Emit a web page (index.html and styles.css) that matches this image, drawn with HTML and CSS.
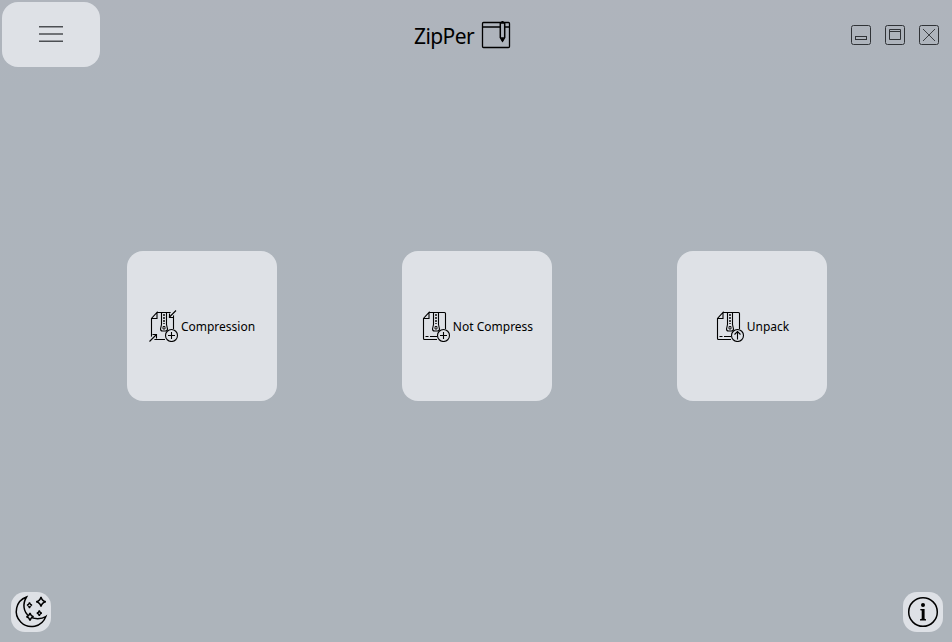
FILE: index.html
```
<!DOCTYPE html>
<html lang="en">
<head>
<meta charset="utf-8">
<title>ZipPer</title>
<link rel="stylesheet" href="styles.css">
</head>
<body>
<svg class="defs" aria-hidden="true">
  <symbol id="archive" viewBox="0 0 32 32">
    <path d="M9 2.500h15.500q1 0 1 1V19M17 29.500H4.500q-1 0-1-1V8.500L9 2.500V8.500H3.500"/>
    <path d="M13.500 3v11.500l-1 4.500q0 2 2 2h3q2 0 2-2l-1-4.500V3" stroke-width="1.100"/>
    <path d="M15 19v-2.500h2V19z" stroke-width=".9"/>
    <path d="M16 4v10" stroke-width="1.400" stroke-dasharray="2 1"/>
    <circle cx="23.500" cy="25.500" r="6" class="badge"/>
  </symbol>
</svg>
<div class="window">
  <header class="titlebar">
    <button class="menu" aria-label="Menu">
      <svg viewBox="0 0 24 18"><path d="M0 1.700h24M0 9h24M0 16.300h24"/></svg>
    </button>
    <div class="brand">
      <h1>ZipPer</h1>
      <svg class="logo" viewBox="0 0 30 30">
        <path d="M19 2.500H2.500q-1 0-1 1v23q0 1 1 1h25q1 0 1-1V3.500q0-1-1-1H24M1.500 7H19M24 7h4.500" stroke-width="1.300"/>
        <path d="M19.300 3.500q0-1.500 2.200-1.500t2.200 1.500V17.500l-2.200 3.500-2.200-3.500z" stroke-width="1.500"/>
        <path d="M19.500 2.900h4M21.500 1v2M21 18h1l-.5 3z" stroke-width="1.600"/>
      </svg>
    </div>
    <div class="controls">
      <svg viewBox="0 0 22 22"><rect x="1.500" y="1.500" width="19" height="19" rx="2"/><rect x="5.500" y="12.500" width="11" height="3"/></svg>
      <svg viewBox="0 0 22 22"><rect x="1.500" y="1.500" width="19" height="19" rx="2"/><path d="M5.500 5.500h11v10h-11zM5.500 7.500h11"/></svg>
      <svg viewBox="0 0 22 22"><rect x="1.500" y="1.500" width="19" height="19" rx="2"/><path d="M5 5l12 12M17 5L5 17" stroke-width=".9"/></svg>
    </div>
  </header>
  <main class="actions">
    <button class="card">
      <svg class="icon" viewBox="0 0 32 32">
        <use href="#archive"/>
        <path class="mask" d="M22 6L28 0M1 32l5-5"/>
        <path d="M28 .5l-7 7M21.500 3.500v4h4M1.500 31.500l7-7M4.500 24.500h4v4M23.500 22v7M20 25.500h7"/>
      </svg>
      <span>Compression</span>
    </button>
    <button class="card">
      <svg class="icon" viewBox="0 0 32 32">
        <use href="#archive"/>
        <path d="M5.500 26.500h3M10 26.500h7M23.500 22v7M20 25.500h7"/>
      </svg>
      <span>Not Compress</span>
    </button>
    <button class="card">
      <svg class="icon" viewBox="0 0 32 32">
        <use href="#archive"/>
        <path d="M5.500 26.500h3M10 26.500h7M23.500 29.500v-8M20.500 24.500l3-3 3 3"/>
      </svg>
      <span>Unpack</span>
    </button>
  </main>
  <footer class="tools">
    <button class="tool" aria-label="Theme">
      <svg viewBox="0 0 40 40">
        <path d="M15.500 5A15.200 15.200 0 1 0 34.800 24.500C30.500 27.500 23 27.500 18.500 24.500C12 20 11.500 11.500 15.500 5z"/>
        <path class="star" d="M30 5q.9 4 4.800 4.800q-3.900.8-4.800 4.800q-.9-4-4.800-4.800q3.900-.8 4.800-4.800z"/>
        <path class="star small" d="M18.500 10.300q.5 2.400 2.500 2.900q-2 .5-2.500 2.900q-.5-2.400-2.500-2.900q2-.5 2.500-2.900z"/>
        <path class="star small" d="M28.300 18.500q.5 2.200 2.500 2.700q-2 .5-2.500 2.700q-.5-2.200-2.500-2.700q2-.5 2.500-2.700z"/>
        <path class="star" d="M19 21q.8 3.100 3.600 3.800q-2.800.7-3.600 3.800q-.8-3.100-3.600-3.800q2.800-.7 3.600-3.800z"/>
      </svg>
    </button>
    <button class="tool" aria-label="Information">
      <svg viewBox="0 0 40 40">
        <circle cx="20" cy="20" r="14.300"/>
        <circle class="solid" cx="20" cy="13" r="2"/>
        <path class="solid" d="M17.300 17h4.300v9.800l1.400.5v1.200h-6v-1.200l1.700-.5v-8.300l-1.400-.3z"/>
      </svg>
    </button>
  </footer>
</div>
</body>
</html>
```
FILE: styles.css
```
* { box-sizing: border-box; }
body {
  margin: 0;
  font-family: "Noto Sans", "DejaVu Sans", sans-serif;
  color: #000;
}
.defs { display: none; }
svg { display: block; fill: none; stroke: #000; }
button { border: 0; padding: 0; font: inherit; color: inherit; background: #dee1e6; }
.window {
  height: 642px;
  display: flex;
  flex-direction: column;
  background: linear-gradient(#afb4bc 0, #adb4bc 90px, #adb4bb);
}
.titlebar {
  height: 70px;
  padding: 2px 12px 3px 2px;
  display: grid;
  grid-template-columns: 412px 1fr auto;
}
.menu {
  width: 98px;
  height: 65px;
  padding-bottom: 1px;
  border-radius: 16px;
  display: flex;
  align-items: center;
  justify-content: center;
}
.menu svg { width: 24px; height: 18px; stroke: #4c4f53; stroke-width: 1.600; }
.brand { display: flex; align-items: center; gap: 7px; height: 65px; }
h1 { margin: 3px 0 0; width: 60px; font-size: 21px; font-weight: 400; line-height: 30px; letter-spacing: -.6px; white-space: nowrap; }
.logo { width: 30px; height: 30px; }
.controls { display: flex; align-items: center; gap: 12px; height: 65px; }
.controls svg { width: 22px; height: 22px; stroke: #303337; }
.actions {
  flex: 1;
  padding-top: 181px;
  padding-left: 127px;
  display: flex;
  align-items: flex-start;
  gap: 125px;
}
.card {
  width: 150px;
  height: 150px;
  padding-right: 1px;
  border-radius: 16px;
  display: flex;
  align-items: center;
  justify-content: center;
  gap: 1px;
  font-size: 12px;
  line-height: 16px;
  white-space: nowrap;
}
.card span { padding-top: 1px; }
.icon { width: 32px; height: 32px; stroke-width: 1.100; }
.badge { fill: #dee1e6; }
.mask { stroke: #dee1e6; stroke-width: 4; }
.tools { display: flex; justify-content: space-between; padding: 0 9px 10px 11px; }
.tool { width: 40px; height: 40px; border-radius: 14px; }
.tool svg { width: 40px; height: 40px; stroke-width: 1.500; }
.star { fill: #dee1e6; stroke-width: 1.400; }
.small { stroke-width: 1.300; }
.solid { fill: #000; stroke: none; }
```
